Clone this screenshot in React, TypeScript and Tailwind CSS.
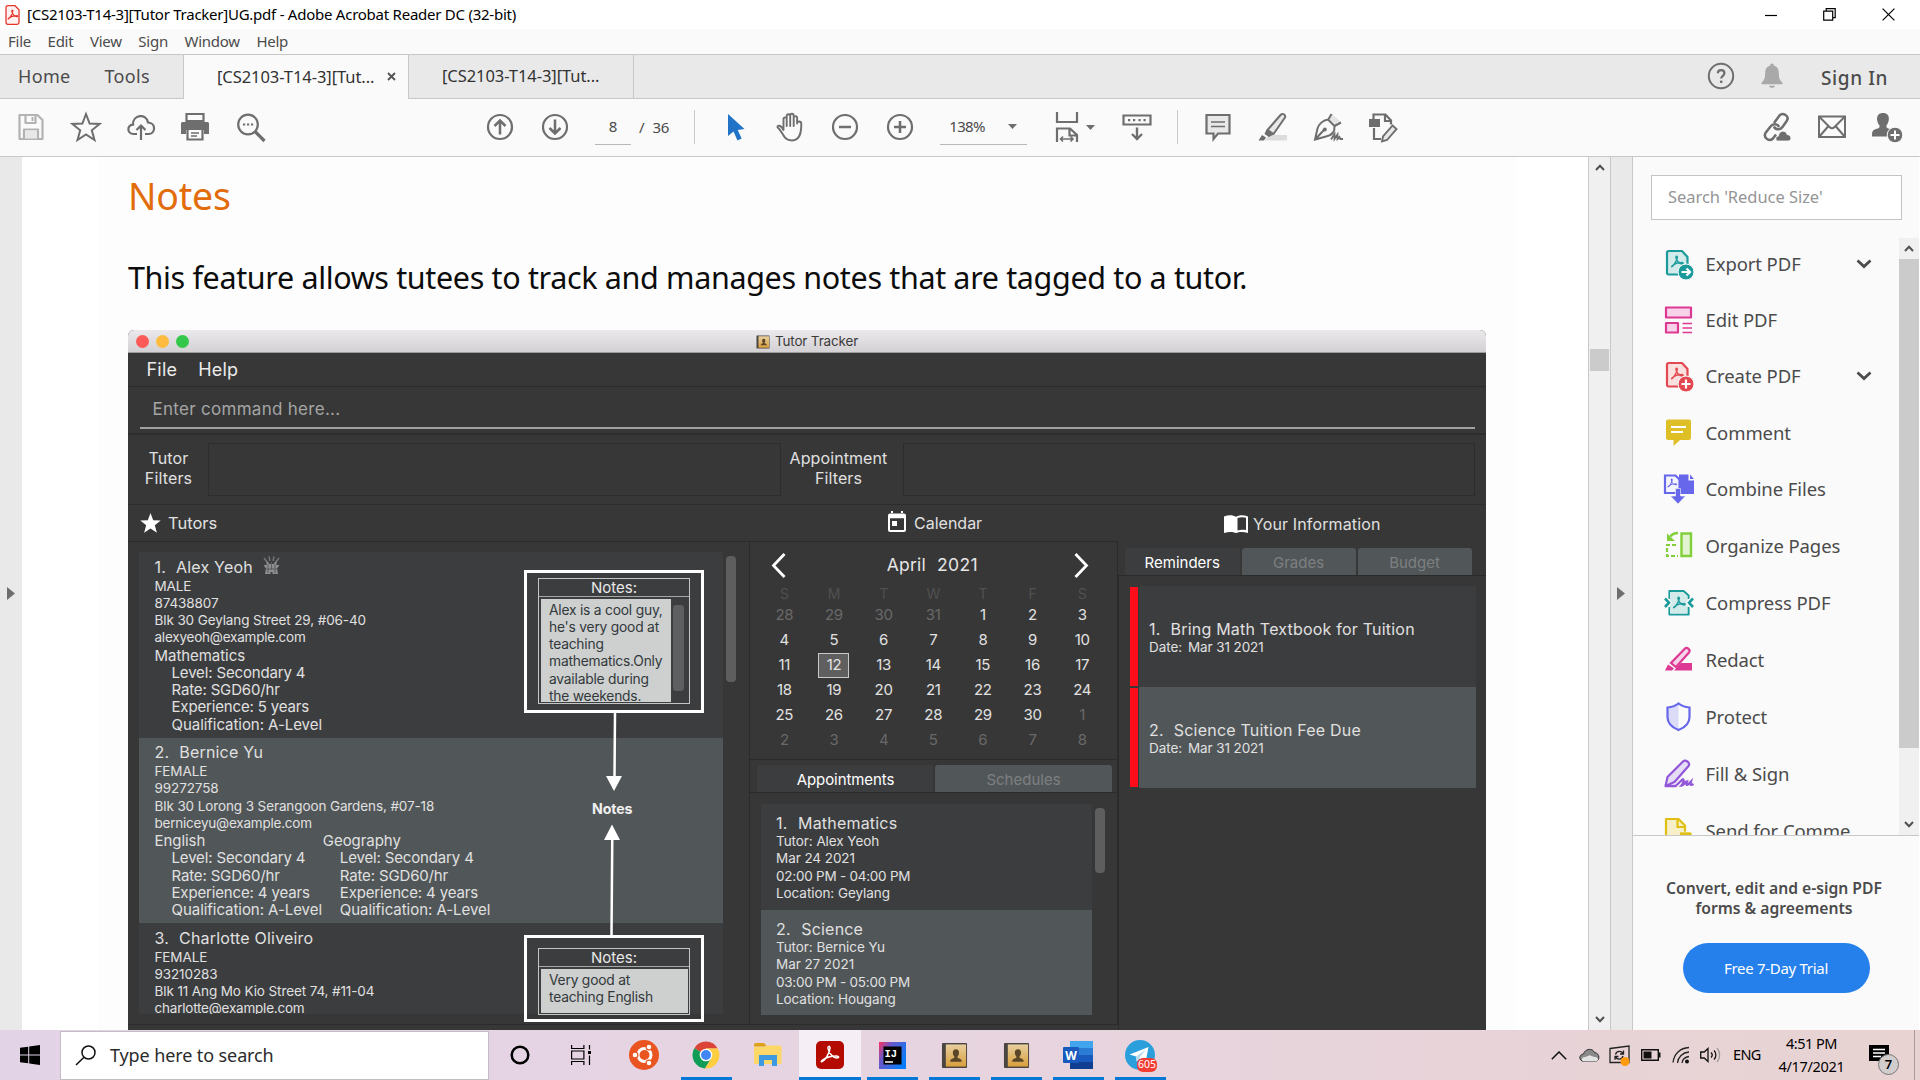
import type { ReactNode } from "react";

type P = { children?: ReactNode; className?: string };

const Svg = ({ s = 32, children, w, h, vb, className = "" }: { s?: number; w?: number; h?: number; vb?: string; children: ReactNode; className?: string }) => (
  <svg width={w ?? s} height={h ?? s} viewBox={vb ?? "0 0 32 32"} fill="none" className={"shrink-0 " + className}>
    {children}
  </svg>
);

const G = "#6e6e6e";

const PdfMark = ({ t, c, w = 1.4 }: { t?: string; c: string; w?: number }) => (
  <path
    transform={t}
    d="M1 11c2-1 5-6 5.300-9.200c0-1.400-1.500-1.200-1.300.2C5.400 5 8 8.200 11 8.400c1.600 0 1.300-1.400-.4-1.300C7 7.200 3.500 8.400 1.400 10.200c-.8.8-.9 1.200-.4.8z"
    stroke={c}
    strokeWidth={w}
    strokeLinejoin="round"
  />
);

/* ---------- title, menu and tab bars ---------- */

function TitleBar() {
  return (
    <div className="flex h-[29px] items-center bg-white pl-[5px]">
      <Svg w={15} h={20} vb="0 0 15 20">
        <path d="M1 2.500a1.800 1.800 0 0 1 1.800-1.800H10l4 4v12.800a1.800 1.800 0 0 1-1.800 1.800H2.800A1.800 1.800 0 0 1 1 17.500z" fill="#fff1f0" stroke="#e5352c" strokeWidth="1.300" />
        <PdfMark t="translate(2.500 4.500) scale(.85)" c="#e5352c" />
      </Svg>
      <span className="ml-[7px] text-[15px] tracking-[-0.0165em] text-black">[CS2103-T14-3][Tutor Tracker]UG.pdf - Adobe Acrobat Reader DC (32-bit)</span>
      <div className="ml-auto flex w-[155px] items-center justify-between pr-[25px]">
        <Svg w={12} h={12} vb="0 0 12 12"><path d="M0 6.500h12" stroke="#000" strokeWidth="1.200" /></Svg>
        <Svg w={13} h={13} vb="0 0 13 13"><path d="M.7 3.200h9v9h-9zM3.200 3V.7h9v9H10" stroke="#000" strokeWidth="1.200" /></Svg>
        <Svg w={13} h={13} vb="0 0 13 13"><path d="M.6.6l11.800 11.800M12.400.6L.6 12.400" stroke="#000" strokeWidth="1.200" /></Svg>
      </div>
    </div>
  );
}

function MenuBar() {
  return (
    <div className="flex h-[26px] items-center gap-[16.500px] border-b border-[#c8c8c8] bg-[#fafafa] pb-[1px] pl-[8px] text-[15px] tracking-[-0.016em] text-[#4b4b4b]">
      <span>File</span><span>Edit</span><span>View</span><span>Sign</span><span>Window</span><span>Help</span>
    </div>
  );
}

function TabBar() {
  return (
    <div className="flex h-[44px] bg-[#e9e9e9]">
      <div className="flex w-[184px] items-center border-r border-b border-[#c8c8c8] pl-[18px] text-[18px] tracking-[0.018em] text-[#4b4b4b]">
        <span>Home</span>
        <span className="ml-[34px]">Tools</span>
      </div>
      <div className="flex w-[225px] items-center border-r border-[#c8c8c8] bg-[#fafafa] pl-[33px] text-[16.500px] tracking-[-0.004em] text-[#323232]">
        <span className="w-[158px] whitespace-nowrap">[CS2103-T14-3][Tut...</span>
        <Svg w={9} h={9} vb="0 0 9 9" className="ml-[12px] -mt-[1px]"><path d="M1 1l7 7M8 1L1 8" stroke="#555" strokeWidth="1.900" /></Svg>
      </div>
      <div className="flex w-[225px] items-center border-r border-b border-[#c8c8c8] pl-[33px] text-[16.500px] tracking-[-0.004em] text-[#323232]">
        <span className="whitespace-nowrap">[CS2103-T14-3][Tut...</span>
      </div>
      <div className="flex flex-1 items-center justify-end border-b border-[#c8c8c8] pr-[30px]">
        <Svg s={28} vb="0 0 28 28" className="-mt-[1px]">
          <circle cx="14" cy="14" r="12.200" stroke={G} strokeWidth="2" />
          <path d="M10.800 11.200c.2-4 6.600-4 6.600 0 0 2.500-3.200 2.700-3.200 5.300" stroke={G} strokeWidth="2.200" />
          <circle cx="14.200" cy="19.800" r="1.400" fill={G} />
        </Svg>
        <Svg w={22} h={26} vb="0 0 22 26" className="ml-[26px] -mt-[1px]">
          <path d="M11 0.500c1.300 0 1.800.8 1.800 2 3.300.8 5 3.500 5 7 0 5.500.8 7.500 3.700 10.300v1.400H.5v-1.400C3.400 17 4.200 15 4.200 9.500c0-3.500 1.700-6.200 5-7 0-1.200.5-2 1.800-2zM8 22.700h6c-.5 2.700-5.500 2.700-6 0z" fill="#a9a9a9" />
        </Svg>
        <span className="ml-[38px] w-[69px] whitespace-nowrap pt-[3px] text-[19px] font-medium tracking-[0.032em] text-[#4b4b4b]">Sign In</span>
      </div>
    </div>
  );
}

/* ---------- toolbar ---------- */

const Cell = ({ children, className = "" }: P) => <div className={"flex w-[55px] shrink-0 justify-center " + className}>{children}</div>;

const Caret = ({ className = "" }: P) => (
  <Svg w={9} h={5} vb="0 0 9 5" className={className}><path d="M0 0h9L4.500 5z" fill={G} /></Svg>
);

function ToolBar() {
  return (
    <div className="flex h-[58px] items-center border-b border-[#c8c8c8] bg-[#fafafa] pb-[1px] pl-[3px] text-[15px] text-[#4b4b4b]">
      <Cell>
        <Svg><path d="M4.500 4h18l5 5v19h-23zM10.500 4v8h10V4M9 28v-9.500h14V28" stroke="#b3b3b3" strokeWidth="2.200" strokeLinejoin="round" /><path d="M16.500 6h2v4h-2z" fill="#b3b3b3" /><path d="M10 19.500h12v8H10z" fill="#e8e8e8" /></Svg>
      </Cell>
      <Cell>
        <Svg><path d="M16 3l3.600 9.500 10 .5-7.800 6.300 2.700 9.700L16 23.500 7.500 29l2.700-9.700L2.400 13l10-.5z" stroke={G} strokeWidth="2" /></Svg>
      </Cell>
      <Cell>
        <Svg><path d="M12 23H8.500c-6.500 0-7-9-.5-9.300C7.500 3.500 21.500 2 23 11.500c8.500.5 7.500 11.500.5 11.500H20M16 29V14.500M11.500 19l4.500-4.500 4.500 4.500" stroke={G} strokeWidth="2.200" /></Svg>
      </Cell>
      <Cell>
        <Svg className="-ml-[2px]"><path d="M7.500 3h17v7h-17z" stroke={G} strokeWidth="2.200" /><path d="M2 12.500A1.500 1.500 0 0 1 3.500 11h25a1.500 1.500 0 0 1 1.500 1.500V23h-5v-4H7v4H2z" fill={G} /><path d="M8.500 18h15v10.500h-15z" fill="#fafafa" stroke={G} strokeWidth="2.200" /><path d="M12 22h8M12 25h6" stroke={G} strokeWidth="1.400" /></Svg>
      </Cell>
      <Cell>
        <Svg><circle cx="13" cy="13.500" r="9.800" stroke={G} strokeWidth="2.200" /><path d="M20 20.500l9.500 9.500" stroke={G} strokeWidth="3.200" /><path d="M8 12.500h2.200v2H8zM12 12.500h2.200v2H12zM16 12.500h2.200v2H16z" fill={G} /></Svg>
      </Cell>
      <Cell className="ml-[194px]">
        <Svg><circle cx="16" cy="16" r="12" stroke={G} strokeWidth="2.200" /><path d="M16 23.500V10M10.500 15L16 9.500l5.500 5.500" stroke={G} strokeWidth="2.500" /></Svg>
      </Cell>
      <Cell>
        <Svg><circle cx="16" cy="16" r="12" stroke={G} strokeWidth="2.200" /><path d="M16 8.500V22M10.500 17l5.500 5.500 5.500-5.500" stroke={G} strokeWidth="2.500" /></Svg>
      </Cell>
      <div className="ml-[13px] flex h-[36px] w-[36px] items-center justify-center border-b border-[#b8b8b8]">8</div>
      <span className="ml-[8px]">/</span>
      <span className="ml-[8px] tracking-[-0.02em]">36</span>
      <div className="ml-[25px] h-[34px] w-px bg-[#cacaca]" />
      <Svg className="ml-[25px]"><path d="M8 3v22l5.500-4.500 4 9 4.200-2-4-8.500L24.500 18z" fill="#2073c6" /></Svg>
      <Svg className="ml-[22px]">
        <path d="M9.500 19V8.200c0-2.500 3.200-2.500 3.200 0V15 5.200c0-2.700 3.500-2.700 3.500 0V15 4.800c0-2.700 3.500-2.700 3.500 0V15 7c0-2.500 3.400-2.500 3.400 0v5.500c0-2.500 4.200-3 4.200.5 0 9-1.500 16.500-9.300 16.500-6 0-7.800-3.500-10.500-8.300-1.300-2.200-2.500-3.800-4-5-.5-2.200 3.500-2.700 6 2.800z" stroke={G} strokeWidth="1.900" strokeLinejoin="round" />
      </Svg>
      <Cell className="ml-[11px]">
        <Svg><circle cx="16" cy="16" r="12" stroke={G} strokeWidth="2.200" /><path d="M10 16h12" stroke={G} strokeWidth="2.500" /></Svg>
      </Cell>
      <Cell>
        <Svg><circle cx="16" cy="16" r="12" stroke={G} strokeWidth="2.200" /><path d="M10 16h12M16 10v12" stroke={G} strokeWidth="2.500" /></Svg>
      </Cell>
      <div className="ml-[13px] flex h-[36px] w-[87px] items-center border-b border-[#b8b8b8] pl-[9px]">
        <span className="w-[37px] tracking-[-0.04em]">138%</span>
        <Caret className="ml-[22px]" />
      </div>
      <Svg className="ml-[24px]">
        <path d="M6 1v10h20V1" stroke={G} strokeWidth="2.200" />
        <path d="M6 31V17.500h13l7 6.500v7M18.500 17.500v7H26" stroke={G} strokeWidth="2.200" />
        <path d="M9.500 28h12M12 25.500L9.500 28l2.500 2.500M19.500 25.500L22 28l-2.500 2.500" stroke={G} strokeWidth="1.600" />
      </Svg>
      <Caret className="ml-[3px]" />
      <Svg className="ml-[26px]">
        <path d="M2.500 4.500h27v9h-27z" stroke={G} strokeWidth="2.200" />
        <path d="M7 8h2.200v2.200H7zM12 8h2.200v2.200H12zM17.500 8h2.200v2.200h-2.200zM22.500 8h2.200v2.200h-2.200z" fill={G} />
        <path d="M16 16.500V28M11 23l5 5 5-5" stroke={G} strokeWidth="2.400" />
      </Svg>
      <div className="ml-[24px] h-[34px] w-px bg-[#cacaca]" />
      <Cell className="ml-[12px]">
        <Svg><path d="M4.500 4h23v18.500H16L11.500 28v-5.500h-7z" fill="#e8e8e8" stroke={G} strokeWidth="2.200" /><path d="M9 11h14M9 15.500h14" stroke={G} strokeWidth="1.600" /></Svg>
      </Cell>
      <Cell>
        <Svg><path d="M12 24h18v5.500H8z" fill="#dcdcdc" /><path d="M24 3.500c2-1.500 5 .5 4 3L16.500 23l-6-4z" fill="#e8e8e8" stroke={G} strokeWidth="2" strokeLinejoin="round" /><path d="M9.500 18.500l7 5-4.500 2.500-4.500-3zM1.500 29.500L5 24l4 2.500-2 3z" fill={G} /></Svg>
      </Cell>
      <Cell>
        <Svg><path d="M17 8l3-5 9 8-5 3z" fill="#e4e4e4" /><path d="M19.500 3l-3.500 6M29 11.500L22.500 15M16 8.500l6.500 6.500c.5 6-3 9.500-8.500 10.500L3 28.500 5.500 17.500c1-4 5-8 10.500-9zM3.500 28l8.500-9" stroke={G} strokeWidth="2" /><circle cx="12.800" cy="18.500" r="2" fill={G} /><path d="M19 28.500l3.500-5.500v5l3-4.500v4.500l2-2 .8 2H31" stroke={G} strokeWidth="1.800" /></Svg>
      </Cell>
      <Cell>
        <Svg><path d="M6.500 8V3.500h12L24 9.500v4M18 3.500V10h6M7 17v11h7" stroke={G} strokeWidth="2.200" /><path d="M2 8h11v8H2z" fill={G} /><path d="M25.500 14.500l4 3.500-9.500 11-5 1.500 1-5z" fill="#e8e8e8" stroke={G} strokeWidth="1.900" /></Svg>
      </Cell>
      <div className="ml-auto flex pr-[6px]">
        <Cell>
          <Svg><path d="M13 12l5.500-7.500c3.500-3.500 10 .5 7.500 5l-4.500 6.500c-2.500 3.500-7.500 2.500-8.500-.5M18 16c-1-3-6-4-8.500-.5L4.500 22c-2.500 5 4 9 7.500 5.500l3-4" stroke={G} strokeWidth="2.500" /><path d="M17 30c-3 0-3-5 .5-5 0-5.500 7.500-6.500 8.500-1.500 5 .5 5 6.500 1 6.500z" fill={G} stroke="#fafafa" strokeWidth=".8" /></Svg>
        </Cell>
        <Cell>
          <Svg><path d="M3 5.500h26v20.500H3zM3 5.500l11 11c1 1 3 1 4 0l11-11M3 26l9.500-11M29 26l-9.500-11" stroke={G} strokeWidth="2" /></Svg>
        </Cell>
        <Cell>
          <Svg><path d="M12 2c8 0 6.500 9 3.500 12.500-.5 2 .5 3 3.500 3.500 3.500.7 4 3 4 7.500H1c0-5 .5-6.500 4-7.500 3-.7 4-1.500 3.500-3.500C5.500 11 4 2 12 2z" fill={G} /><circle cx="24" cy="24" r="7.800" fill={G} stroke="#fafafa" strokeWidth="1" /><path d="M24 19.500v9M19.500 24h9" stroke="#fff" strokeWidth="2" /></Svg>
        </Cell>
      </div>
    </div>
  );
}

/* ---------- Tutor Tracker window shown in the page ---------- */

const Book = ({ s = 16 }: { s?: number }) => (
  <Svg s={s} vb="0 0 28 28">
    <defs><linearGradient id="bk" x1="0" y1="0" x2="0" y2="1"><stop offset="0" stopColor="#e7cf9f" /><stop offset="1" stopColor="#d99f3c" /></linearGradient></defs>
    <rect x="1" y="1" width="26" height="26" rx="1" fill="#4a4540" />
    <rect x="5" y="2.500" width="21" height="23" fill="url(#bk)" />
    <path d="M15.500 7.500c4.500 0 3.500 6 1.700 7.500v1.700c3 .8 4.300 1.300 4.300 3.800h-12c0-2.500 1.300-3 4.300-3.800V15c-1.800-1.500-2.800-7.500 1.700-7.500z" fill="#5b4728" />
  </Svg>
);

const Row = ({ children, className = "" }: P) => <div className={"h-[17.250px] whitespace-nowrap leading-[17.250px] " + className}>{children}</div>;

type Subject = { name: string; years: number };
type Tutor = { n: string; name: string; sex: string; phone: string; addr: string; mail: string; subjects: Subject[]; fav?: boolean };

const tutors: Tutor[] = [
  { n: "1.", name: "Alex Yeoh", sex: "MALE", phone: "87438807", addr: "Blk 30 Geylang Street 29, #06-40", mail: "alexyeoh@example.com", subjects: [{ name: "Mathematics", years: 5 }], fav: true },
  { n: "2.", name: "Bernice Yu", sex: "FEMALE", phone: "99272758", addr: "Blk 30 Lorong 3 Serangoon Gardens, #07-18", mail: "berniceyu@example.com", subjects: [{ name: "English", years: 4 }, { name: "Geography", years: 4 }] },
  { n: "3.", name: "Charlotte Oliveiro", sex: "FEMALE", phone: "93210283", addr: "Blk 11 Ang Mo Kio Street 74, #11-04", mail: "charlotte@example.com", subjects: [] },
];

function TutorCard({ t, alt }: { t: Tutor; alt: boolean }) {
  return (
    <div className={"h-[185.500px] shrink-0 pt-[5px] pl-[15.500px] " + (alt ? "bg-[#515658]" : "bg-[#3c3d3f]")}>
      <div className="flex h-[20.500px] items-center text-[16px] leading-[21px] tracking-[0.012em]">
        <span>{t.n}</span>
        <span className="ml-[10px]">{t.name}</span>
        {t.fav && (
          <Svg w={17} h={19} vb="0 0 17 19" className="ml-[10px] -mt-[3px]">
            <path d="M3.500 4l3 4h4l3-4v5h3l-2.500 3.500 1 5.500H2l1-5.500L.5 9h3z" fill="#8d8e8f" />
            <path d="M1 2l3 4M16 2l-3 4M6 .5l1 4.500M11 .5L10 5" stroke="#77787a" strokeWidth="1.400" />
            <path d="M5 8v9M8.500 6v8M12 8v9M2.500 13h12" stroke="#5c5d5f" strokeWidth="1" />
            <path d="M8.500 16v2.500" stroke="#3c3d3f" strokeWidth="2" />
          </Svg>
        )}
      </div>
      <div className="text-[13.500px] tracking-[-0.008em]">
        <Row>{t.sex}</Row>
        <Row>{t.phone}</Row>
        <Row>{t.addr}</Row>
        <Row className="tracking-[-0.016em]">{t.mail}</Row>
      </div>
      <div className="flex text-[15px] tracking-[-0.003em]">
        {t.subjects.map((s) => (
          <div key={s.name} className="w-[168.300px]">
            <Row>{s.name}</Row>
            <div className="pl-[17px] tracking-[-0.010em]">
              <Row>Level: Secondary 4</Row>
              <Row>Rate: SGD60/hr</Row>
              <Row>Experience: {s.years} years</Row>
              <Row className="tracking-[-0.003em]">Qualification: A-Level</Row>
            </div>
          </div>
        ))}
      </div>
    </div>
  );
}

const weeks = [
  [28, 29, 30, 31, 1, 2, 3], [4, 5, 6, 7, 8, 9, 10], [11, 12, 13, 14, 15, 16, 17],
  [18, 19, 20, 21, 22, 23, 24], [25, 26, 27, 28, 29, 30, 1], [2, 3, 4, 5, 6, 7, 8],
];

function Calendar() {
  return (
    <div className="h-[218px] border-b border-[#2b2b2b]">
      <div className="flex h-[43px] items-center justify-between pt-[4px] pr-[28px] pl-[21px]">
        <Svg w={15} h={25} vb="0 0 15 25"><path d="M13.500 1L2.500 12.500l11 11.500" stroke="#fff" strokeWidth="2.800" /></Svg>
        <div className="pl-[5px] text-[17.500px] text-[#e6e6e6]"><span className="tracking-[0.01em]">April</span><span className="ml-[11px] tracking-[0.025em]">2021</span></div>
        <Svg w={15} h={25} vb="0 0 15 25"><path d="M1.500 1l11 11.500L1.500 24" stroke="#fff" strokeWidth="2.800" /></Svg>
      </div>
      <div className="ml-[9.500px] grid w-[347.500px] grid-cols-7 text-center text-[15px] tracking-[-0.02em] text-[#e2e2e2]">
        {["S", "M", "T", "W", "T", "F", "S"].map((d, i) => <div key={i} className="h-[17.500px] leading-[18px] text-[14px] text-[#505050]">{d}</div>)}
        {weeks.flatMap((w, r) => w.map((d, c) => {
          const other = (r === 0 && d > 20) || (r > 3 && d < 10);
          const sel = r === 2 && d === 12;
          return (
            <div key={r + "-" + c} className="flex h-[25px] items-center justify-center">
              <div className={"flex h-[25px] w-[31px] items-center justify-center " + (sel ? "border border-[#c9c9c9] bg-[#5f5f5f]" : other ? "text-[#696969]" : "")}>{d}</div>
            </div>
          );
        }))}
      </div>
    </div>
  );
}

const Tab = ({ children, active, className = "" }: P & { active?: boolean }) => (
  <div className={"flex h-[27px] items-center justify-center rounded-t-[3px] text-[15px] leading-none " + (active ? "bg-[#3c3d3f] text-white " : "bg-[#515658] text-[#7d8081] ") + className}>{children}</div>
);

function Appointment({ n, name, lines, alt, className = "" }: { n: string; name: string; lines: string[]; alt?: boolean; className?: string }) {
  return (
    <div className={"pl-[15px] pt-[8.500px] " + (alt ? "bg-[#515658] " : "bg-[#3c3d3f] ") + className}>
      <div className="h-[20.500px] text-[16px] leading-[20px] tracking-[0.012em]"><span>{n}</span><span className="ml-[10.500px]">{name}</span></div>
      <div className="text-[13.500px] tracking-[-0.005em]">{lines.map((l) => <Row key={l} className={l.endsWith("PM") ? "tracking-[-0.018em]" : ""}>{l}</Row>)}</div>
    </div>
  );
}

function Reminder({ n, name, alt }: { n: string; name: string; alt?: boolean }) {
  return (
    <div className="flex h-[101px] gap-[1px]">
      <div className="my-[1px] w-[8px] bg-[#ff0d1b]" />
      <div className={"flex-1 pt-[32.500px] pl-[10px] " + (alt ? "bg-[#515658]" : "bg-[#3c3d3f]")}>
        <div className="h-[20px] text-[16px] leading-[20px] tracking-[0.013em]"><span>{n}</span><span className="ml-[10px]">{name}</span></div>
        <div className="h-[17px] text-[13.500px] leading-[17px] tracking-[-0.005em]"><span>Date:</span><span className="ml-[6px] tracking-[-0.008em]">Mar 31 2021</span></div>
      </div>
    </div>
  );
}

const NotesBox = ({ className, children, scroll }: P & { scroll?: boolean }) => (
  <div className={"absolute left-[396px] w-[180px] border-[3px] border-white px-[11px] " + className}>
    <div className="flex h-full flex-col border border-[#c4c6c6]">
      <div className="flex h-[18.500px] shrink-0 items-center justify-center border-b border-[#a5a7a7] text-[15px] leading-none text-[#e8e8e8]">Notes:</div>
      <div className="mx-[1.500px] mt-[1.500px] mb-[1px] flex min-h-0 flex-1">
        <div className="flex-1 overflow-hidden bg-[#cdd0cf] pt-[3px] pl-[8.500px] text-[13.800px] tracking-[-0.015em] text-[#33383b]">{children}</div>
        {scroll && <div className="w-[17px] pt-[6px] pl-[2px]"><div className="h-[86px] w-[11px] rounded-[3px] bg-[#5e5f60]" /></div>}
      </div>
    </div>
  </div>
);

function TrackerWindow() {
  return (
    <div className="relative flex h-[700px] w-[1358px] flex-col overflow-hidden rounded-t-[6px] bg-[#373737] font-[Inter,'Liberation_Sans',sans-serif] text-[#e0e0e0]">
      <div className="relative flex h-[23px] shrink-0 items-center justify-center border-b border-[#9d9b9d] bg-linear-to-b from-[#ebe9ec] to-[#d4d1d5] pt-[1px]">
        <div className="absolute left-[7.500px] flex gap-[7px]">
          <div className="size-[13px] rounded-full bg-[#fc5b57]" />
          <div className="size-[13px] rounded-full bg-[#fdbc40]" />
          <div className="size-[13px] rounded-full bg-[#34c84a]" />
        </div>
        <Book s={14} />
        <span className="ml-[5px] text-[13.500px] tracking-[-0.012em] text-[#3b3b3b]">Tutor Tracker</span>
      </div>
      <div className="flex h-[34px] shrink-0 items-center gap-[21px] border-b border-[#2b2b2b] pb-[1px] pl-[18.500px] text-[18px] tracking-[0.012em] text-[#ebebeb]">
        <span>File</span><span>Help</span>
      </div>
      <div className="h-[48px] shrink-0 border-b-2 border-[#2d2d2d] pr-[11px] pl-[12px]">
        <div className="flex h-[42px] items-center border-b-2 border-[#a0a0a0] pt-[6px] pl-[12.500px] text-[17px] tracking-[0.017em] text-[#a5a5a5]">Enter command here...</div>
      </div>
      <div className="flex h-[70px] shrink-0 items-center border-b border-[#2d2d2d] pr-[11px] text-center text-[16px] leading-[20px] text-[#e0e0e0]">
        <div className="w-[80px] pl-[1px] pb-[3px] tracking-[0.01em]">Tutor<br />Filters</div>
        <div className="h-[53px] w-[573px] border border-[#2d2d2d]" />
        <div className="w-[122px] pr-[7px] pb-[3px] text-center tracking-[0.006em]">Appointment<br />Filters</div>
        <div className="h-[53px] flex-1 border border-[#2d2d2d]" />
      </div>
      <div className="flex min-h-0 flex-1">
        {/* tutors */}
        <div className="flex w-[622px] flex-col">
          <div className="flex h-[37px] shrink-0 items-center border-b border-[#2b2b2b] pl-[12px] text-[16.500px]">
            <Svg w={21} h={20} vb="0 0 21 20"><path d="M10.500 0l2.700 7.200 7.500.3-5.900 4.700 2.100 7.500-6.400-4.300-6.400 4.300 2.100-7.500L.3 7.500l7.500-.3z" fill="#fff" /></Svg>
            <span className="ml-[7px]">Tutors</span>
          </div>
          <div className="flex h-[483px] border-r border-b border-[#2b2b2b] pt-[10px] pl-[11px]">
            <div className="flex h-[462px] w-[584px] flex-col overflow-hidden">
              {tutors.map((t, i) => <TutorCard key={t.n} t={t} alt={i === 1} />)}
            </div>
            <div className="mt-[4px] ml-[3px] h-[126px] w-[10px] rounded-[4px] bg-[#5e5e5e]" />
          </div>
        </div>
        {/* calendar and appointments */}
        <div className="flex w-[368px] flex-col">
          <div className="flex h-[37px] shrink-0 items-center border-b border-[#2b2b2b] pl-[137px] text-[16px]">
            <Svg w={20} h={22} vb="0 0 20 22" className="-mt-[2px]"><path d="M3 2.500h14a2 2 0 0 1 2 2v14.500a2 2 0 0 1-2 2H3a2 2 0 0 1-2-2V4.500a2 2 0 0 1 2-2zm0 4.700V19h14V7.200zM4 0h2v3H4zM14 0h2v3h-2zM5 10h5v5H5z" fill="#fff" fillRule="evenodd" /></Svg>
            <span className="ml-[7px]">Calendar</span>
          </div>
          <div className="flex h-[483px] flex-col border-r border-b border-[#2b2b2b]">
            <Calendar />
            <div className="flex h-[33px] shrink-0 items-end gap-[2px] border-b border-[#2b2b2b] pl-[7px]">
              <Tab active className="w-[176px] pt-[1px] pl-[1px] tracking-[-0.005em]">Appointments</Tab>
              <Tab className="w-[177px] pt-[1px]">Schedules</Tab>
            </div>
            <div className="flex pt-[11px] pl-[11px]">
              <div className="w-[331px]">
                <Appointment n="1." name="Mathematics" lines={["Tutor: Alex Yeoh", "Mar 24 2021", "02:00 PM - 04:00 PM", "Location: Geylang"]} className="h-[106px]" />
                <Appointment alt n="2." name="Science" lines={["Tutor: Bernice Yu", "Mar 27 2021", "03:00 PM - 05:00 PM", "Location: Hougang"]} className="h-[105px]" />
              </div>
              <div className="mt-[4px] ml-[3px] h-[65px] w-[10px] rounded-[4px] bg-[#5e5e5e]" />
            </div>
          </div>
        </div>
        {/* personal information */}
        <div className="flex w-[368px] flex-col">
          <div className="flex h-[37px] shrink-0 items-center pl-[106px] text-[16px]">
            <Svg w={24} h={18} vb="0 0 24 18"><path d="M0 1.500C4-.3 9-.3 12 1.800 15-.3 20-.3 24 1.500V18c-4-1.500-9-1.500-12 0-3-1.500-8-1.500-12 0zm13.500 1.600v12.400c2.500-1 6-1 8.500-.4V2.800c-2.500-.8-6-.8-8.500.3z" fill="#fff" fillRule="evenodd" /></Svg>
            <span className="ml-[5px] tracking-[0.008em]">Your Information</span>
          </div>
          <div className="flex h-[34px] shrink-0 items-end gap-[2px] border-b border-[#2b2b2b] pl-[7px]">
            <Tab active className="w-[114.500px] pt-[1px]">Reminders</Tab>
            <Tab className="w-[114px] pt-[1px]">Grades</Tab>
            <Tab className="w-[114px] pt-[1px]">Budget</Tab>
          </div>
          <div className="flex-1 border-l border-[#2b2b2b] pt-[10px] pr-[10.500px] pl-[11px]">
            <Reminder n="1." name="Bring Math Textbook for Tuition" />
            <Reminder alt n="2." name="Science Tuition Fee Due" />
          </div>
        </div>
      </div>

      {/* callouts drawn over the window */}
      <NotesBox scroll className="top-[239.500px] h-[143.500px] pt-[5px] pb-[6px]">
        {["Alex is a cool guy,", "he's very good at", "teaching", "mathematics.Only", "available during", "the weekends."].map((l) => <Row key={l}>{l}</Row>)}
      </NotesBox>
      <NotesBox className="top-[605px] h-[87px] pt-[9.500px] pb-[4px]">
        <Row>Very good at</Row>
        <Row>teaching English</Row>
      </NotesBox>
      <Svg w={24} h={224} vb="0 0 24 224" className="absolute top-[383px] left-[473.500px]">
        <path d="M13 0L12.500 66M10.300 122L9.500 223" stroke="#fff" strokeWidth="2.500" />
        <path d="M4 63h16l-8 15zM2 127h16L10 111.500z" fill="#fff" />
      </Svg>
      <div className="absolute top-[470px] left-[464px] text-[14.200px] font-bold leading-[18px] tracking-[-0.01em] text-[#f0f0f0]">Notes</div>
    </div>
  );
}

/* ---------- right tools panel ---------- */

const DocIcon = ({ c, f, children }: { c: string; f: string; children: ReactNode }) => (
  <Svg><path d="M4 4.500A1.500 1.500 0 0 1 5.500 3h13.500l5.500 6v17.500H5.500A1.500 1.500 0 0 1 4 25z" fill={f} stroke={c} strokeWidth="2.200" strokeLinejoin="round" /><PdfMark t="translate(8 7.500)" c={c} w={1.500} />{children}</Svg>
);

const tools: { label: string; icon: ReactNode; more?: boolean; tall?: boolean }[] = [
  { label: "Export PDF", more: true, icon: <DocIcon c="#1b9a9c" f="#d3eaea"><circle cx="23" cy="24" r="8" fill="#1b9a9c" stroke="#fafafa" strokeWidth="1" /><path d="M18.500 24h8M23.500 20.500L27 24l-3.500 3.500" stroke="#fff" strokeWidth="2.200" /></DocIcon> },
  { label: "Edit PDF", icon: <Svg><path d="M3 3.500h25v10H3zM3 19h12v9.500H3z" fill="#f6d3e8" stroke="#dd3894" strokeWidth="2.200" strokeLinejoin="round" /><path d="M19.500 19.500H29M19.500 24H29M19.500 28.500H29" stroke="#dd3894" strokeWidth="1.400" /></Svg> },
  { label: "Create PDF", more: true, icon: <DocIcon c="#e34850" f="#fadfdf"><circle cx="23" cy="24" r="8" fill="#e34850" stroke="#fafafa" strokeWidth="1" /><path d="M18.500 24h9M23 19.500v9" stroke="#fff" strokeWidth="2.200" /></DocIcon> },
  { label: "Comment", icon: <Svg><path d="M5 3.500h21a2 2 0 0 1 2 2V22a2 2 0 0 1-2 2H17l-6.500 6V24H5a2 2 0 0 1-2-2V5.500a2 2 0 0 1 2-2z" fill="#dfbf26" /><path d="M8 11h15M8 16h12" stroke="#fff" strokeWidth="2" /></Svg> },
  { label: "Combine Files", tall: true, icon: <Svg><path d="M16 1.500h9.500V7.500H31V21H16z" fill="#6767ec" /><path d="M27 1.500L31 6h-4z" fill="#6767ec" /><path d="M2 2.500h10.500l4 4V20H2z" fill="#f4f4ff" stroke="#6767ec" strokeWidth="2.200" /><PdfMark t="translate(4.500 5.500) scale(.75)" c="#6767ec" /><path d="M12.500 15.500h5V23h5L15 31l-7.500-8h5z" fill="#6767ec" stroke="#fafafa" strokeWidth=".6" /></Svg> },
  { label: "Organize Pages", tall: true, icon: <Svg><path d="M18.500 3.500H28V26h-9.500z" fill="#e1f3d0" stroke="#82cf3c" strokeWidth="2.400" /><path d="M13 15H4v11h11" stroke="#82cf3c" strokeWidth="2.200" strokeDasharray="4 2" /><path d="M15 3c-4 0-6 1.200-7.500 3.500" stroke="#82cf3c" strokeWidth="2.600" /><path d="M4 3.500V11h8z" fill="#82cf3c" /></Svg> },
  { label: "Compress PDF", tall: true, icon: <Svg><path d="M6.500 12V4h14l5 4.500V12M6.500 20v7.500h19V20" stroke="#1b9a9c" strokeWidth="2.200" strokeLinejoin="round" /><path d="M7 5h13l4.500 4v17.500H7z" fill="#d3eaea" /><PdfMark t="translate(10 9.500)" c="#1b9a9c" w={1.500} /><path d="M2 11.500l4 4.200-4 4.300M30 11.500l-4 4.200 4 4.300" stroke="#fafafa" strokeWidth="5" /><path d="M2 11.500l4 4.200-4 4.300M30 11.500l-4 4.200 4 4.300" stroke="#1b9a9c" strokeWidth="2.600" /></Svg> },
  { label: "Redact", tall: true, icon: <Svg><path d="M18 19h11v7.500H11z" fill="#dd3894" /><path d="M22 4.500c2-2 6 1.500 4 4L13 23l-5-4z" fill="#f6d3e8" stroke="#dd3894" strokeWidth="2.200" /><path d="M2 26.500l3-6 6 4-2 2z" fill="#dd3894" /></Svg> },
  { label: "Protect", tall: true, icon: <Svg><path d="M15.500 2.500v26C9 26 4.500 22 4.500 16V6.500c4.500 0 8-1.500 11-4z" fill="#dcdcf8" /><path d="M15.500 2.500c3 2.500 6.500 3.500 11 4V16c0 6-4.500 10.500-11 13-6.500-2.500-11-7-11-13V6.500c4.500-.5 8-1.500 11-4z" stroke="#6767ec" strokeWidth="2.200" /></Svg> },
  { label: "Fill & Sign", tall: true, icon: <Svg><path d="M20 3.500c2.500-2.500 8 1.500 5.500 4.500L11.500 24 2.500 28l2-9z" fill="#e6dcf5" stroke="#9256d9" strokeWidth="2.200" strokeLinejoin="round" /><path d="M2.500 28h10l7-6.500c2-1 1 4-1 6 3 0 3-4 5.500-4-1.500 3 0 4.500 2 2l2-2c-1 4 0 4 2.500 2.500" stroke="#9256d9" strokeWidth="2.300" /></Svg> },
  { label: "Send for Comme", tall: true, icon: <Svg><path d="M3 4h12.500l6.500 6.500V28H3z" fill="#f7efc7" stroke="#dfc012" strokeWidth="2.200" strokeLinejoin="round" /><path d="M14.500 4v8H22" stroke="#dfc012" strokeWidth="2.200" /><path d="M16.500 17H27a2 2 0 0 1 2 2v9H16.500z" fill="#dfc012" stroke="#fafafa" strokeWidth=".6" /><path d="M19 21.500h7" stroke="#fff" strokeWidth="1.600" /></Svg> },
];

const ScrollArrow = ({ down }: { down?: boolean }) => (
  <Svg w={10} h={7} vb="0 0 10 7"><path d={down ? "M1 1l4 4.200L9 1" : "M1 6l4-4.200L9 6"} stroke="#505050" strokeWidth="2" /></Svg>
);

function ToolsPanel() {
  return (
    <div className="flex w-[287px] shrink-0 flex-col border-l border-[#c8c8c8] bg-[#fafafa]">
      <div className="h-[81px] shrink-0 pt-[18px] pl-[18px]">
        <div className="flex h-[45px] w-[251px] items-center border border-[#c4c4c4] bg-white pl-[16px] text-[16.500px] tracking-[-0.003em] text-[#959595]">Search 'Reduce Size'</div>
      </div>
      <div className="flex h-[598px] shrink-0 border-b border-[#c8c8c8]">
        <div className="-mt-[2px] h-[599px] w-[266px] overflow-hidden pl-[16px]">
          {tools.map((t) => (
            <div key={t.label} className={"flex items-center pl-[13.500px] text-[18.500px] tracking-[-0.005em] text-[#4b4b4b] " + (t.tall ? "h-[57px]" : "h-[56.150px]")}>
              {t.icon}
              <span className="ml-[11px] w-[148px] whitespace-nowrap">{t.label}</span>
              {t.more && <Svg w={16} h={10} vb="0 0 16 10" className="ml-[2px]"><path d="M1.500 1.500L8 7.500l6.500-6" stroke="#4b4b4b" strokeWidth="2.800" /></Svg>}
            </div>
          ))}
        </div>
        <div className="flex w-[20px] flex-col items-center bg-[#f0f0f0]">
          <div className="flex h-[21px] items-center"><ScrollArrow /></div>
          <div className="h-[489px] w-full bg-[#cbcbcb]" />
          <div className="mt-auto flex h-[22px] items-center"><ScrollArrow down /></div>
        </div>
      </div>
      <div className="flex flex-1 flex-col items-center pt-[42px]">
        <div className="mr-[4px] text-center text-[15.700px] leading-[20px] font-semibold text-[#4b4b4b]">Convert, edit and e-sign PDF<br />forms &amp; agreements</div>
        <div className="mt-[25px] flex h-[50px] w-[187px] items-center justify-center rounded-full bg-[#2680eb] text-[15px] tracking-[-0.02em] text-white">Free 7-Day Trial</div>
      </div>
    </div>
  );
}

/* ---------- Windows taskbar ---------- */

const TaskButton = ({ children, open, active }: P & { open?: boolean; active?: boolean }) => (
  <div className={"relative flex h-full w-[62px] items-center justify-center " + (active ? "bg-[#f5eef5]" : "")}>
    {children}
    {open && <div className={"absolute bottom-0 h-[3px] bg-[#0478d7] " + (active ? "inset-x-0" : "inset-x-[5.500px]")} />}
  </div>
);

function Taskbar() {
  return (
    <div className="flex h-[50px] items-center bg-linear-to-r from-[#e3d3e6] via-[#e6d4e2] via-40% to-[#e8d3d2] text-black">
      <div className="flex w-[60px] justify-center">
        <Svg s={20} vb="0 0 20 20"><path d="M0 2.800L8.200 1.700v7.800H0zM9.200 1.500L20 0v9.500H9.200zM0 10.500h8.200v7.800L0 17.200zM9.200 10.500H20V20L9.200 18.500z" fill="#000" /></Svg>
      </div>
      <div className="flex h-[49px] w-[429px] items-center border border-[#c3bcc4] bg-white pl-[14px]">
        <Svg s={21} vb="0 0 21 21"><circle cx="13.500" cy="7.500" r="6.500" stroke="#111" strokeWidth="1.500" /><path d="M9 12.300L1 20" stroke="#111" strokeWidth="1.500" /></Svg>
        <span className="ml-[14px] text-[18px] tracking-[-0.006em] text-[#2b2b2b]">Type here to search</span>
      </div>
      <TaskButton><Svg s={20} vb="0 0 20 20"><circle cx="10" cy="10" r="8.300" stroke="#000" strokeWidth="2.500" /></Svg></TaskButton>
      <TaskButton><Svg w={20} h={20} vb="0 0 20 20" className="-ml-[3px]"><path d="M.6 0v3.500h12.300V0M.6 20v-3.500h12.300V20M.6 6h12.300v8H.6zM18.500 0v4.500M18.500 10.500V20" stroke="#000" strokeWidth="1.200" /><path d="M17 6h3v3h-3z" fill="#000" /></Svg></TaskButton>
      <TaskButton>
        <Svg s={30} vb="0 0 30 30"><circle cx="15" cy="15" r="15" fill="#e95420" /><circle cx="15.500" cy="15" r="6.500" stroke="#fff" strokeWidth="3" /><g fill="#fff" stroke="#e95420" strokeWidth="1.200"><circle cx="6" cy="15" r="2.900" /><circle cx="20" cy="7" r="2.900" /><circle cx="20" cy="23" r="2.900" /></g></Svg>
      </TaskButton>
      <TaskButton open>
        <Svg s={28} vb="0 0 28 28"><path d="M14 14L2.300 7.200A13.500 13.500 0 0 1 25.700 7.500H14z" fill="#db4437" /><path d="M14 14L2.300 7.200A13.500 13.500 0 0 0 13 27.500l6-10z" fill="#0f9d58" /><path d="M14 7.500h11.700A13.500 13.500 0 0 1 13 27.500l6-10z" fill="#ffcd40" /><circle cx="14" cy="14" r="6.300" fill="#fff" /><circle cx="14" cy="14" r="5" fill="#4285f4" /></Svg>
      </TaskButton>
      <TaskButton>
        <Svg w={28} h={24} vb="0 0 28 24"><path d="M0 2a2 2 0 0 1 2-2h8l3 3.500H0z" fill="#dfa116" /><path d="M0 4h10l2.500-1.500H26a1.500 1.500 0 0 1 1.500 1.500v17H0z" fill="#fdd868" /><path d="M5 23V12h18v11h-5v-6h-8v6z" fill="#3e9ae0" /></Svg>
      </TaskButton>
      <TaskButton open active>
        <Svg s={28} vb="0 0 28 28"><rect width="28" height="28" rx="5" fill="#b30b00" /><path d="M6 20.500c3-1 8-9 8-13.500 0-2.500-2.500-2-2 .5.800 5 5.500 9.500 9 9.500 2.500 0 2-2-.5-2-5 0-10.500 1.500-14 4-1.500 1.200-1.500 2-.5 1.500z" stroke="#fff" strokeWidth="1.500" /></Svg>
      </TaskButton>
      <TaskButton open>
        <Svg s={27} vb="0 0 27 27"><defs><linearGradient id="ij" x1="0" y1="0" x2="1" y2=".6"><stop offset="0" stopColor="#fe315d" /><stop offset=".35" stopColor="#6b57c8" /><stop offset="1" stopColor="#087cfa" /></linearGradient></defs><rect width="27" height="27" fill="url(#ij)" /><rect x="4.500" y="4.500" width="18" height="18" fill="#000" /><path d="M6 20h8" stroke="#fff" strokeWidth="1.500" /><text x="5.500" y="14.500" fill="#fff" fontSize="10.500" fontWeight="700" fontFamily="Liberation Mono, monospace">IJ</text></Svg>
      </TaskButton>
      <TaskButton open><Book s={27} /></TaskButton>
      <TaskButton open><Book s={27} /></TaskButton>
      <TaskButton open>
        <Svg w={30} h={28} vb="0 0 30 28"><path d="M7 0h23v7H7z" fill="#41a5ee" /><path d="M7 7h23v7H7z" fill="#2b7cd3" /><path d="M7 14h23v7H7z" fill="#185abd" /><path d="M7 21h23v7H7z" fill="#103f91" /><rect y="6" width="16" height="16" rx="1" fill="#185abd" /><text x="8" y="18.500" textAnchor="middle" fill="#fff" fontSize="12" fontWeight="700" fontFamily="Open Sans, sans-serif">W</text></Svg>
      </TaskButton>
      <TaskButton open>
        <Svg s={30} vb="0 0 30 30"><circle cx="15" cy="15" r="15" fill="#2a9fdb" /><path d="M4.500 14.500L23.500 7l-3 16-6-4.500-2.800 3-.7-5z" fill="#fff" /><path d="M11 16.500L20.500 10l-6 7.500-2.800 4z" fill="#b9d9ee" /></Svg>
        <div className="absolute top-[28px] left-[28px] flex h-[14px] w-[20px] items-center justify-center rounded-[6px] bg-[#f23c34] text-[10.500px] text-white">605</div>
      </TaskButton>
      <div className="ml-auto flex h-full items-center text-[14.500px]">
        <Svg w={16} h={9} vb="0 0 16 9"><path d="M.8 8.200L8 1l7.200 7.200" stroke="#111" strokeWidth="1.500" /></Svg>
        <Svg w={21} h={15} vb="0 0 21 15" className="ml-[12px]"><path d="M5 13.500C-.5 13-.5 6.500 4.500 6 6 .5 13.500-.3 15.500 4.500c5.500.5 6 8.500.5 9z" fill="#8a8a8a" stroke="#333" /><path d="M4.500 13.500c-3-1.500-1.500-5 2-4.500l4-1.800 5 1.800c3.500-.5 5 3.500 1.500 4.500z" fill="#e3e3e3" /></Svg>
        <Svg w={22} h={21} vb="0 0 22 21" className="ml-[9px]"><path d="M1 3.500L20 1v16.500H1z" stroke="#222" strokeWidth="1.300" /><path d="M6.500 9.500c1-4 6.500-4 7.500-.5M14.500 5.500V9H11M14 11c-1 4-6.500 4-7.500.5M6 14.800V11.500h3.500" stroke="#222" strokeWidth="1.300" /><circle cx="16" cy="16.500" r="4.500" fill="#ff9a0a" /></Svg>
        <Svg w={20} h={12} vb="0 0 20 12" className="ml-[10px]"><path d="M.7.700h16.600v10.600H.7z" stroke="#111" strokeWidth="1.400" /><path d="M2.500 2.500h8v7h-8zM18 3.500h1.500v5H18z" fill="#111" /></Svg>
        <Svg w={18} h={18} vb="0 0 18 18" className="ml-[11px]"><path d="M1 16.500C2 8 8 2 17 1.500M5.500 17C6 11 10.500 6.500 17 6M10 17c.5-3.500 3-6 7-6.500" stroke="#222" strokeWidth="1.300" /><circle cx="15" cy="15.500" r="2" fill="#111" /></Svg>
        <Svg w={21} h={18} vb="0 0 21 18" className="ml-[10px]"><path d="M.7 6h3.500L8 2.500v13L4.200 12H.7z" stroke="#111" strokeWidth="1.300" /><path d="M11 6.500c1.500 1.500 1.500 3.500 0 5M14 4.500c2.500 2.500 2.500 6.500 0 9" stroke="#111" strokeWidth="1.300" /><path d="M17 2c3.500 3.500 3.500 10.500 0 14" stroke="#999" strokeWidth="1.200" /></Svg>
        <span className="ml-[12px] w-[29px] tracking-[-0.045em]">ENG</span>
        <div className="ml-[16px] w-[67px] text-center leading-[23px]">
          <div className="tracking-[-0.034em]">4:51 PM</div>
          <div className="tracking-[-0.02em]">4/17/2021</div>
        </div>
        <div className="relative ml-[24px] h-[32px] w-[32px]">
          <Svg w={20} h={20} vb="0 0 20 20" className="mt-[6px]"><path d="M0 0h20v16h-5v4l-4-4H0z" fill="#000" /><path d="M4 4.500h12M4 8h12M4 11.500h8" stroke="#fff" strokeWidth="1.400" /></Svg>
          <div className="absolute top-[15px] left-[9px] flex size-[21px] items-center justify-center rounded-full border border-[#777] bg-[#d2cdcd] text-[13px] font-semibold">7</div>
        </div>
        <div className="ml-[13px] h-full w-[6px] border-l border-[#a99c9c]" />
      </div>
    </div>
  );
}

export default function App() {
  return (
    <div className="flex h-[1080px] w-[1920px] flex-col overflow-hidden bg-white font-['Noto_Sans','Open_Sans',sans-serif]">
      <TitleBar />
      <MenuBar />
      <TabBar />
      <ToolBar />
      <div className="flex h-[873px]">
        <div className="flex w-[22px] items-center justify-end bg-[#e9e9e9] pr-[7px]">
          <Svg w={8} h={13} vb="0 0 8 13"><path d="M0 0l8 6.500L0 13z" fill="#6e6e6e" /></Svg>
        </div>
        <div className="flex w-[1566px] bg-white pl-[76px]">
          <div className="w-[1418px] bg-[#fdfdfd] pl-[30px]">
            <h1 className="h-[77px] pt-[12px] text-[37.500px] leading-[54px] tracking-[-0.006em] text-[#e36c0a]">Notes</h1>
            <p className="h-[96px] pt-[21px] text-[30.500px] leading-[44px] tracking-[-0.0115em] whitespace-nowrap text-[#0c0c0c]">This feature allows tutees to track and manages notes that are tagged to a tutor.</p>
            <TrackerWindow />
          </div>
        </div>
        <div className="flex w-[23px] flex-col items-center border-x border-[#c8c8c8] bg-[#f0f0f0]">
          <div className="flex h-[20px] items-center"><ScrollArrow /></div>
          <div className="mt-[172px] h-[22px] w-[19px] bg-[#cbcbcb]" />
          <div className="mt-auto flex h-[22px] items-center"><ScrollArrow down /></div>
        </div>
        <div className="flex w-[21px] items-center bg-[#e9e9e9] pl-[6px]">
          <Svg w={8} h={13} vb="0 0 8 13"><path d="M0 0l8 6.500L0 13z" fill="#6e6e6e" /></Svg>
        </div>
        <ToolsPanel />
      </div>
      <Taskbar />
    </div>
  );
}
